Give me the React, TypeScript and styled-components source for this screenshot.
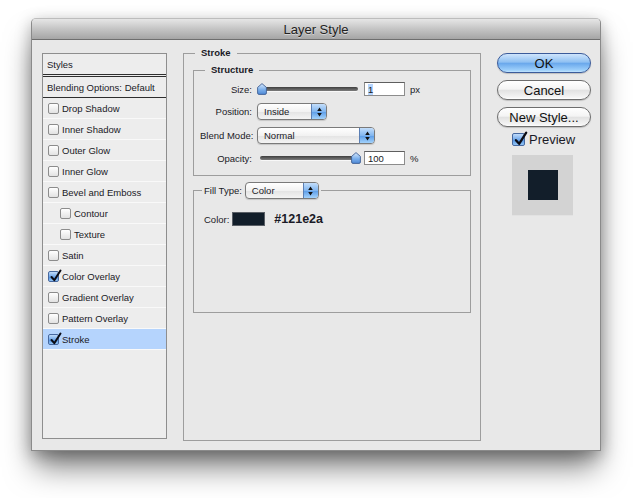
import styled, { createGlobalStyle } from "styled-components"

const GlobalStyle = createGlobalStyle`
    html, body {
        margin: 0;
        padding: 0;
        background: #ffffff;
    }
    body {
        font-family: "Liberation Sans", Arial, sans-serif;
        color: #1a1a26;
    }
    * {
        box-sizing: border-box;
    }
`

const Page = styled.div`
    width: 640px;
    height: 498px;
    padding: 18px 0 0 31px;
    overflow: hidden;
`

const Window = styled.div`
    width: 570px;
    height: 433px;
    display: flex;
    flex-direction: column;
    background: #e8e8e8;
    border: 1px solid #8a8a8a;
    border-top-color: #bdbdbd;
    border-radius: 5px 5px 0 0;
    box-shadow: 0 20px 30px -4px rgba(0, 0, 0, 0.5), 0 4px 16px rgba(0, 0, 0, 0.28);
`

const TitleBar = styled.div`
    flex: none;
    height: 21px;
    display: flex;
    align-items: center;
    justify-content: center;
    font-size: 13px;
    color: #222;
    background: linear-gradient(#e6e6e6, #c4c4c4 50%, #a5a5a5);
    border-bottom: 1px solid #6e6e6e;
    border-radius: 4px 4px 0 0;
    text-shadow: 0 1px 0 rgba(255, 255, 255, 0.45);
`

const Body = styled.div`
    flex: 1;
    display: grid;
    grid-template-columns: 125px 298px 94px;
    column-gap: 16px;
    align-items: start;
    padding: 13px 0 0 10px;
`

/* left list */

const StylesPanel = styled.div`
    height: 386px;
    display: flex;
    flex-direction: column;
    background: #ededed;
    border: 1px solid #8e8e8e;
`

const PanelHeader = styled.div<{ $double?: boolean }>`
    height: ${p => (p.$double ? 23 : 21)}px;
    display: flex;
    align-items: center;
    padding-left: 4px;
    font-size: 9.5px;
    border-bottom: ${p => (p.$double ? "3px double #2e2e2e" : "1px solid #2e2e2e")};
`

const StyleRow = styled.div<{ $indent?: boolean; $selected?: boolean }>`
    height: 21px;
    display: flex;
    align-items: center;
    gap: 3px;
    padding-left: ${p => (p.$indent ? 17 : 5)}px;
    font-size: 9.5px;
    border-bottom: 1px solid #f9f9f9;
    background: ${p => (p.$selected ? "#b5d4fd" : "transparent")};
`

const Box = styled.span<{ $checked?: boolean; $size: number }>`
    position: relative;
    flex: none;
    width: ${p => p.$size}px;
    height: ${p => p.$size}px;
    border-radius: 2px;
    border: 1px solid ${p => (p.$checked ? "#46689f" : "#8c8c8c")};
    background: ${p =>
        p.$checked
            ? "linear-gradient(#c1dcfb, #72a9ea 50%, #4f8fe0 51%, #94c6f6)"
            : "linear-gradient(#ffffff, #e2e2e2)"};
`

const Tick = styled.svg`
    position: absolute;
    left: 0;
    top: -3px;
`

/* middle form */

const Group = styled.fieldset`
    margin: 0;
    min-width: 0;
    border: 1px solid #9d9d9d;
`

const OuterGroup = styled(Group)`
    margin-top: -6px;
    height: 394px;
    padding: 0 9px;
`

const StructureGroup = styled(Group)`
    margin-top: 5px;
    padding: 6px 6px 10px;
`

const FillGroup = styled(Group)`
    margin-top: 6px;
    padding: 13px 10px 86px;
`

const Legend = styled.legend<{ $offset: number; $bold?: boolean; $pad?: number }>`
    margin-left: ${p => p.$offset}px;
    padding: 0 ${p => p.$pad ?? 6}px;
    font-size: 9.5px;
    line-height: 12px;
    font-weight: ${p => (p.$bold ? "bold" : "normal")};
`

const LegendRow = styled.div`
    display: flex;
    align-items: center;
    gap: 3px;
`

const FormGrid = styled.div`
    display: grid;
    grid-template-columns: 52px auto;
    grid-template-rows: 14px 17px 17px 14px;
    column-gap: 5px;
    row-gap: 7px;
    align-items: center;
`

const Label = styled.span`
    text-align: right;
    font-size: 9.5px;
    white-space: nowrap;
`

const Controls = styled.div`
    display: flex;
    align-items: center;
`

const Slider = styled.div`
    position: relative;
    width: 104px;
    height: 14px;
    display: flex;
    align-items: center;
`

const Track = styled.div`
    flex: 1;
    margin: 0 3px;
    height: 4px;
    border-radius: 2px;
    background: linear-gradient(#3e3e3e, #7c7c7c);
    box-shadow: 0 1px 0 rgba(255, 255, 255, 0.7);
`

const Thumb = styled.svg`
    position: absolute;
    top: 1px;
`

const NumberInput = styled.div`
    width: 41px;
    height: 14px;
    margin-left: 3px;
    display: flex;
    align-items: center;
    padding-left: 3px;
    font-size: 9.5px;
    background: #ffffff;
    border: 1px solid #8c8c8c;
    border-top-color: #5e5e5e;
`

const Selected = styled.span`
    background: #b5d4fd;
`

const Unit = styled.span`
    margin-left: 5px;
    font-size: 9.5px;
`

const Select = styled.div<{ $width: number }>`
    width: ${p => p.$width}px;
    height: 17px;
    display: flex;
    overflow: hidden;
    border: 1px solid #7a7a7a;
    border-radius: 4px;
    background: linear-gradient(#ffffff, #f2f2f2 50%, #e3e3e3 51%, #f4f4f4);
    box-shadow: 0 1px 1px rgba(0, 0, 0, 0.15);
`

const SelectText = styled.span`
    flex: 1;
    padding-left: 6px;
    font-size: 9.5px;
    line-height: 15px;
`

const SelectArrows = styled.span`
    width: 15px;
    display: flex;
    align-items: center;
    justify-content: center;
    border-left: 1px solid #5b7fb4;
    background: linear-gradient(#c3defb, #82b6ef 50%, #5a9be7 51%, #a3d2fb);
`

const ColorRow = styled.div`
    height: 14px;
    display: flex;
    align-items: center;
    font-size: 9.5px;
`

const Swatch = styled.div<{ $color: string }>`
    width: 33px;
    height: 14px;
    margin-left: 3px;
    background: ${p => p.$color};
    border: 1px solid #5a5f66;
`

const Hex = styled.span`
    margin-left: 9px;
    font-size: 12.5px;
    font-weight: bold;
`

/* right column */

const Actions = styled.div`
    display: flex;
    flex-direction: column;
    gap: 7px;
`

const Button = styled.div<{ $primary?: boolean }>`
    height: 20px;
    display: flex;
    align-items: center;
    justify-content: center;
    font-size: 13px;
    color: #111;
    border-radius: 10px;
    border: 1px solid ${p => (p.$primary ? "#3b5b9a" : "#6d6d6d")};
    background: ${p =>
        p.$primary
            ? "linear-gradient(#cfe5fc, #8fc0f2 45%, #6aa8ec 52%, #9ed0fb 90%, #c2e4fd)"
            : "linear-gradient(#ffffff, #f4f4f4 45%, #e2e2e2 52%, #f4f4f4 90%, #ffffff)"};
    box-shadow: 0 1px 1px rgba(0, 0, 0, 0.18);
`

const PreviewToggle = styled.div`
    height: 16px;
    margin-top: -3px;
    padding-left: 15px;
    display: flex;
    align-items: center;
    gap: 4px;
    font-size: 13px;
`

const PreviewBox = styled.div`
    width: 61px;
    height: 61px;
    margin: 1px 0 0 15px;
    display: flex;
    align-items: center;
    justify-content: center;
    background: #d3d3d3;
    border-bottom: 1px solid #e2e2e2;
`

const PreviewSquare = styled.div<{ $color: string }>`
    width: 30px;
    height: 30px;
    background: ${p => p.$color};
`

function Checkbox({ checked, size = 11 }: { checked?: boolean; size?: number }) {
    return (
        <Box $checked={checked} $size={size}>
            {checked && (
                <Tick width={size + 2} height={size + 3} viewBox="0 0 13 14">
                    <path d="M2.5 8 L5.3 11.2 L11.5 1.5" fill="none" stroke="#0b0b14" strokeWidth="2" strokeLinecap="round" strokeLinejoin="round" />
                </Tick>
            )}
        </Box>
    )
}

function RangeSlider({ value }: { value: number }) {
    return (
        <Slider>
            <Track />
            <Thumb width="10" height="12" viewBox="0 0 10 12" style={{ left: value * 94 }}>
                <defs>
                    <linearGradient id="thumbFill" x1="0" y1="0" x2="0" y2="1">
                        <stop offset="0" stopColor="#d8e9fc" />
                        <stop offset="0.55" stopColor="#7eb1ec" />
                        <stop offset="1" stopColor="#4d88d6" />
                    </linearGradient>
                </defs>
                <path d="M5 0.6 L9.4 4.4 V10 Q9.4 11.4 8 11.4 H2 Q0.6 11.4 0.6 10 V4.4 Z" fill="url(#thumbFill)" stroke="#3f5f94" strokeWidth="0.9" />
            </Thumb>
        </Slider>
    )
}

function PopupSelect({ value, width }: { value: string; width: number }) {
    return (
        <Select $width={width}>
            <SelectText>{value}</SelectText>
            <SelectArrows>
                <svg width="5" height="10" viewBox="0 0 5 10">
                    <path d="M2.5 0.5 L4.8 4 H0.2 Z M0.2 6 H4.8 L2.5 9.5 Z" fill="#111" />
                </svg>
            </SelectArrows>
        </Select>
    )
}

const effects: { name: string; checked?: boolean; indent?: boolean; selected?: boolean }[] = [
    { name: "Drop Shadow" },
    { name: "Inner Shadow" },
    { name: "Outer Glow" },
    { name: "Inner Glow" },
    { name: "Bevel and Emboss" },
    { name: "Contour", indent: true },
    { name: "Texture", indent: true },
    { name: "Satin" },
    { name: "Color Overlay", checked: true },
    { name: "Gradient Overlay" },
    { name: "Pattern Overlay" },
    { name: "Stroke", checked: true, selected: true },
]

export default function App() {
    const strokeColor = "#121e2a"

    return (
        <Page>
            <GlobalStyle />
            <Window>
                <TitleBar>Layer Style</TitleBar>
                <Body>
                    <StylesPanel>
                        <PanelHeader $double>Styles</PanelHeader>
                        <PanelHeader>Blending Options: Default</PanelHeader>
                        {effects.map(e => (
                            <StyleRow key={e.name} $indent={e.indent} $selected={e.selected}>
                                <Checkbox checked={e.checked} />
                                {e.name}
                            </StyleRow>
                        ))}
                    </StylesPanel>

                    <OuterGroup>
                        <Legend $offset={2} $bold>Stroke</Legend>
                        <StructureGroup>
                            <Legend $offset={5} $bold>Structure</Legend>
                            <FormGrid>
                                <Label>Size:</Label>
                                <Controls>
                                    <RangeSlider value={0} />
                                    <NumberInput><Selected>1</Selected></NumberInput>
                                    <Unit>px</Unit>
                                </Controls>
                                <Label>Position:</Label>
                                <Controls>
                                    <PopupSelect value="Inside" width={70} />
                                </Controls>
                                <Label>Blend Mode:</Label>
                                <Controls>
                                    <PopupSelect value="Normal" width={118} />
                                </Controls>
                                <Label>Opacity:</Label>
                                <Controls>
                                    <RangeSlider value={1} />
                                    <NumberInput>100</NumberInput>
                                    <Unit>%</Unit>
                                </Controls>
                            </FormGrid>
                        </StructureGroup>
                        <FillGroup>
                            <Legend $offset={-2} $pad={2}>
                                <LegendRow>
                                    Fill Type:
                                    <PopupSelect value="Color" width={74} />
                                </LegendRow>
                            </Legend>
                            <ColorRow>
                                Color:
                                <Swatch $color={strokeColor} />
                                <Hex>{strokeColor}</Hex>
                            </ColorRow>
                        </FillGroup>
                    </OuterGroup>

                    <Actions>
                        <Button $primary>OK</Button>
                        <Button>Cancel</Button>
                        <Button>New Style...</Button>
                        <PreviewToggle>
                            <Checkbox checked size={13} />
                            Preview
                        </PreviewToggle>
                        <PreviewBox>
                            <PreviewSquare $color={strokeColor} />
                        </PreviewBox>
                    </Actions>
                </Body>
            </Window>
        </Page>
    )
}
